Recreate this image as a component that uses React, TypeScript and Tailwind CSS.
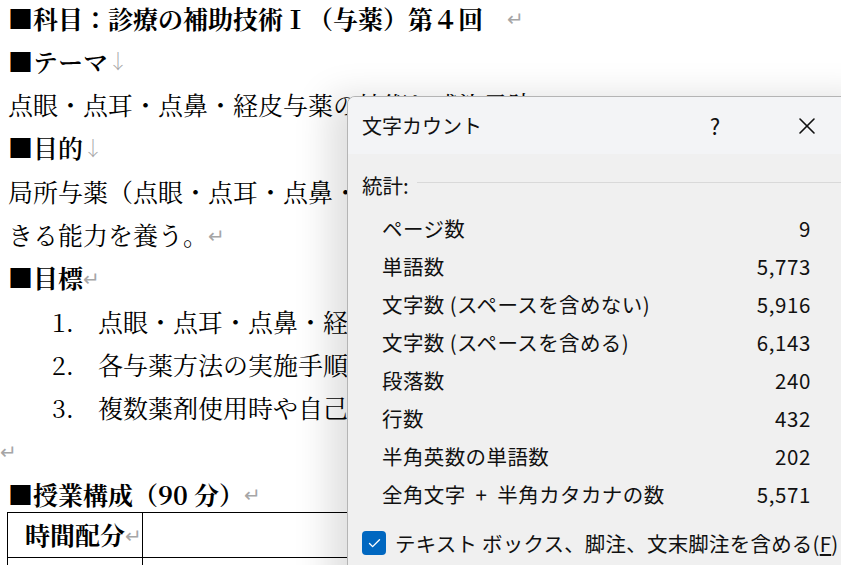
import { Check, X } from 'lucide-react'
import type { ReactNode } from 'react'

const DOC_FONT = { fontFamily: '"Noto Serif CJK JP", "Liberation Serif", "Noto Sans CJK JP", serif' }
const UI_FONT = { fontFamily: '"Noto Sans CJK JP", "Noto Sans", sans-serif' }

const STATS: [string, string][] = [
  ['ページ数', '9'],
  ['単語数', '5,773'],
  ['文字数 (スペースを含めない)', '5,916'],
  ['文字数 (スペースを含める)', '6,143'],
  ['段落数', '240'],
  ['行数', '432'],
  ['半角英数の単語数', '202'],
  ['全角文字 + 半角カタカナの数', '5,571'],
]

function Mark({ ch = '↵' }: { ch?: string }) {
  return <span className="text-[#a6a6a6] font-normal text-[20px] leading-none">{ch}</span>
}

function Line({ children, className = '' }: { children?: ReactNode; className?: string }) {
  return (
    <div className={`h-[43.3px] flex items-center whitespace-nowrap leading-none ${className}`}>
      {children}
    </div>
  )
}

function Doc() {
  return (
    <div className="text-[25px] text-black pl-2 -mt-[3.6px]" style={DOC_FONT}>
      <Line className="font-bold">
        ■科目：診療の補助技術Ⅰ（与薬）第４回<span className="inline-block w-6" />
        <Mark />
      </Line>
      <Line className="font-semibold">■テーマ<Mark ch="↓" /></Line>
      <Line>点眼・点耳・点鼻・経皮与薬の技術と感染予防<Mark /></Line>
      <Line className="font-semibold">■目的<Mark ch="↓" /></Line>
      <Line>局所与薬（点眼・点耳・点鼻・経皮）の根拠に基づいた援助を安全に実施で</Line>
      <Line>きる能力を養う。<Mark /></Line>
      <Line className="font-bold">■目標<Mark /></Line>
      <Line className="pl-[44px]">1.<span className="inline-block w-[24px]" />点眼・点耳・点鼻・経皮与薬の目的と根拠を説明できる。</Line>
      <Line className="pl-[44px]">2.<span className="inline-block w-[24px]" />各与薬方法の実施手順を安全に実施できる。</Line>
      <Line className="pl-[44px]">3.<span className="inline-block w-[24px]" />複数薬剤使用時や自己管理への援助を考えられる。</Line>
      <Line className="-ml-2"><Mark /></Line>
      <Line className="font-bold">■授業構成（90 分）<Mark /></Line>
      <div className="-ml-[1px] -mt-[4px] w-[760px] border border-black grid grid-cols-[135px_1fr]">
        <div className="h-[45px] border-r border-b border-black pl-[17px] font-bold flex items-center leading-none">
          時間配分<Mark />
        </div>
        <div className="h-[45px] border-b border-black" />
        <div className="h-[45px] border-r border-black" />
        <div className="h-[45px]" />
      </div>
    </div>
  )
}

function WordCountDialog() {
  return (
    <div
      className="absolute left-[347px] top-[96px] w-[540px] h-[520px] rounded-tl-[8px] border border-[#b4b4b4] bg-[#f0f0f0] shadow-[-18px_0_36px_rgba(0,0,0,0.13)] overflow-hidden text-[#111]"
      style={UI_FONT}
    >
      <div className="h-[57px] bg-[#f3f4f6] flex items-center pl-[14px] text-[20px]">
        <span>文字カウント</span>
        <span className="ml-auto w-[40px] text-center mr-[52px] text-[22px]">?</span>
        <span className="w-[40px] flex justify-center mr-[59px]">
          <X size={28} strokeWidth={1.4} />
        </span>
      </div>
      <div className="pl-[14px] pt-[16px] text-[20.5px]">
        <div className="flex items-center gap-2 h-[30px]">
          <span>統計:</span>
          <div className="flex-1 h-px bg-[#d9d9d9] -mt-[6px]" />
        </div>
        <div className="pl-[20px] pr-[75px] mt-[9px]">
          {STATS.map(([label, value]) => (
            <div key={label} className="flex justify-between h-[38px] items-center">
              <span className={`tracking-[0.4px] ${label.includes('+') ? '[word-spacing:5px]' : ''}`}>{label}</span>
              <span className="tracking-[0.6px]">{value}</span>
            </div>
          ))}
        </div>
        <div className="flex items-center gap-[9px] mt-[15px]">
          <span className="w-[24px] h-[24px] rounded-[4px] bg-[#0067c0] flex items-center justify-center">
            <Check size={15} strokeWidth={2.2} className="text-white" />
          </span>
          <span className="whitespace-nowrap tracking-[0.2px]">
            テキスト ボックス、脚注、文末脚注を含める(<span className="underline underline-offset-2">F</span>)
          </span>
        </div>
      </div>
    </div>
  )
}

export default function App() {
  return (
    <div className="relative w-[841px] h-[565px] overflow-hidden bg-white">
      <Doc />
      <WordCountDialog />
    </div>
  )
}
